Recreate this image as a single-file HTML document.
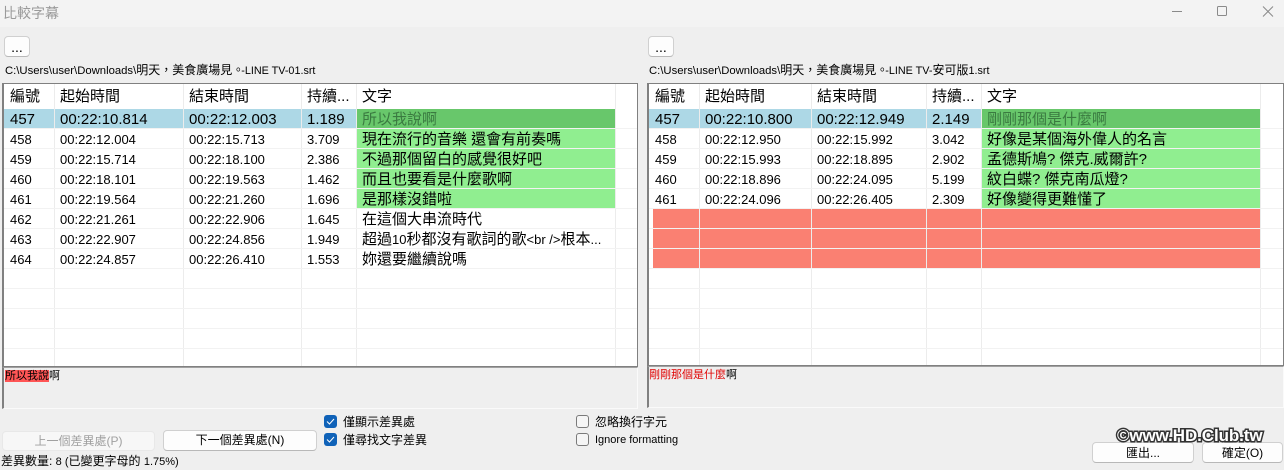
<!DOCTYPE html>
<html><head><meta charset="utf-8"><style>
*{box-sizing:border-box}
html,body{margin:0;padding:0}
body{width:1284px;height:469px;overflow:hidden;background:#efefef;position:relative;font:12px "Liberation Sans","WenQuanYi Zen Hei","Noto Sans CJK TC",sans-serif;color:#000}
.a{position:absolute;white-space:nowrap}
.tb{left:0;top:0;width:1284px;height:27px;background:#f3f3f3}
.btn{position:absolute;background:#fdfdfd;border:1px solid #d0d0d0;border-bottom-color:#b8b8b8;border-radius:4px;text-align:center;white-space:nowrap}
.list{position:absolute;top:83px;background:#fff;border:1px solid #808080;border-width:1px 1px 1px 2px;overflow:hidden}
.row{position:absolute;left:0;height:19px;display:grid;column-gap:1px;font-size:15px;line-height:21px}
.L .row{grid-template-columns:50px 128px 117px 54px 258px 21px}
.R .row{grid-template-columns:50px 111px 114px 54px 278px 21px}
.row div{padding-left:5px;overflow:hidden;white-space:nowrap;position:relative}
.row div:first-child{padding-left:6px}
.n div{font-size:13px}
.n div:nth-child(5){font-size:15px}
.n span{font-size:13px}
.h{top:0;height:25px;line-height:26px}
.s div:nth-child(-n+4){background:#add8e6}
.s div:nth-child(5){background:#68c76b;color:#3a7a40}
.g div:nth-child(5){background:#90ee90}
.r div:nth-child(-n+5){background:#fa8072}
.v{position:absolute;top:0;bottom:0;width:1px;background:#ececec}
.hl{position:absolute;left:0;right:0;height:1px;background:#f2f2f2}
.pn{position:absolute;border:1px solid #fafafa;border-left:2px solid #808080;border-top:1px solid #a0a0a0}
.cb{position:absolute;width:13px;height:13px;border-radius:3px;background:#0f62b8}
.cb svg{position:absolute;left:2px;top:2px}
.ub{position:absolute;width:13px;height:13px;border-radius:3px;border:1px solid #7a7a7a;background:#f5f5f5}
.wm{left:1117px;top:426px;font-size:17px;font-weight:bold;color:#fff;letter-spacing:-.1px;-webkit-text-stroke:3px #333;paint-order:stroke fill}
.p span{font-size:11.3px}
.p span+span{font-size:10.8px;margin-left:-3px}
</style></head><body>
<div class="a tb"></div>
<div class="a" style="left:3px;top:4px;font-size:14px;line-height:18px;color:#9a9a9a">比較字幕</div>
<svg class="a" style="left:1160px;top:0" width="124" height="27" fill="none" stroke="#8a8a8a" stroke-width="1"><path d="M12 11.5H22"/><rect x="57.5" y="6.5" width="9" height="9" rx="1"/><path d="M103 6.5L113 16.5M113 6.5L103 16.5"/></svg>

<div class="btn" style="left:4px;top:36px;width:26px;height:21px;line-height:20px;font-size:14px">...</div>
<div class="btn" style="left:648px;top:36px;width:26px;height:21px;line-height:20px;font-size:14px">...</div>
<div class="a p" style="left:5px;top:62px;line-height:16px"><span>C:\Users\user\Downloads\</span>明天，美食廣場見。<span>-LINE TV-01.srt</span></div>
<div class="a p" style="left:649px;top:62px;line-height:16px"><span>C:\Users\user\Downloads\</span>明天，美食廣場見。<span>-LINE TV-</span>安可版<span style="margin:0">1.srt</span></div>

<div class="list L" style="left:2px;width:636px;height:284px">
<i class="v" style="left:50px"></i><i class="v" style="left:179px"></i><i class="v" style="left:297px"></i><i class="v" style="left:352px"></i><i class="v" style="left:611px"></i>
<i class="hl" style="top:44px"></i><i class="hl" style="top:64px"></i><i class="hl" style="top:84px"></i><i class="hl" style="top:104px"></i><i class="hl" style="top:124px"></i><i class="hl" style="top:144px"></i><i class="hl" style="top:164px"></i><i class="hl" style="top:184px"></i><i class="hl" style="top:204px"></i><i class="hl" style="top:224px"></i><i class="hl" style="top:244px"></i><i class="hl" style="top:264px"></i>
<div class="row h"><div>編號</div><div>起始時間</div><div>結束時間</div><div>持續...</div><div>文字</div></div>
<div class="row s" style="top:25px"><div>457</div><div>00:22:10.814</div><div>00:22:12.003</div><div>1.189</div><div>所以我說啊</div></div>
<div class="row n g" style="top:45px"><div>458</div><div>00:22:12.004</div><div>00:22:15.713</div><div>3.709</div><div>現在流行的音樂 還會有前奏嗎</div></div>
<div class="row n g" style="top:65px"><div>459</div><div>00:22:15.714</div><div>00:22:18.100</div><div>2.386</div><div>不過那個留白的感覺很好吧</div></div>
<div class="row n g" style="top:85px"><div>460</div><div>00:22:18.101</div><div>00:22:19.563</div><div>1.462</div><div>而且也要看是什麼歌啊</div></div>
<div class="row n g" style="top:105px"><div>461</div><div>00:22:19.564</div><div>00:22:21.260</div><div>1.696</div><div>是那樣沒錯啦</div></div>
<div class="row n" style="top:125px"><div>462</div><div>00:22:21.261</div><div>00:22:22.906</div><div>1.645</div><div>在這個大串流時代</div></div>
<div class="row n" style="top:145px"><div>463</div><div>00:22:22.907</div><div>00:22:24.856</div><div>1.949</div><div>超過<span>10</span>秒都沒有歌詞的歌<span>&lt;br /&gt;</span>根本<span>...</span></div></div>
<div class="row n" style="top:165px"><div>464</div><div>00:22:24.857</div><div>00:22:26.410</div><div>1.553</div><div>妳還要繼續說嗎</div></div>
</div>

<div class="list R" style="left:647px;width:637px;height:283px">
<i class="v" style="left:50px"></i><i class="v" style="left:162px"></i><i class="v" style="left:277px"></i><i class="v" style="left:332px"></i><i class="v" style="left:611px"></i>
<i class="hl" style="top:44px"></i><i class="hl" style="top:64px"></i><i class="hl" style="top:84px"></i><i class="hl" style="top:104px"></i><i class="hl" style="top:124px"></i><i class="hl" style="top:144px"></i><i class="hl" style="top:164px"></i><i class="hl" style="top:184px"></i><i class="hl" style="top:204px"></i><i class="hl" style="top:224px"></i><i class="hl" style="top:244px"></i><i class="hl" style="top:264px"></i>
<div class="row h"><div>編號</div><div>起始時間</div><div>結束時間</div><div>持續...</div><div>文字</div></div>
<div class="row s" style="top:25px"><div>457</div><div>00:22:10.800</div><div>00:22:12.949</div><div>2.149</div><div>剛剛那個是什麼啊</div></div>
<div class="row n g" style="top:45px"><div>458</div><div>00:22:12.950</div><div>00:22:15.992</div><div>3.042</div><div>好像是某個海外偉人的名言</div></div>
<div class="row n g" style="top:65px"><div>459</div><div>00:22:15.993</div><div>00:22:18.895</div><div>2.902</div><div>孟德斯鳩? 傑克.威爾許?</div></div>
<div class="row n g" style="top:85px"><div>460</div><div>00:22:18.896</div><div>00:22:24.095</div><div>5.199</div><div>紋白蝶? 傑克南瓜燈?</div></div>
<div class="row n g" style="top:105px"><div>461</div><div>00:22:24.096</div><div>00:22:26.405</div><div>2.309</div><div>好像變得更難懂了</div></div>
<div class="row r" style="top:125px;left:4px;grid-template-columns:46px 111px 114px 54px 278px"><div></div><div></div><div></div><div></div><div></div></div>
<div class="row r" style="top:145px;left:4px;grid-template-columns:46px 111px 114px 54px 278px"><div></div><div></div><div></div><div></div><div></div></div>
<div class="row r" style="top:165px;left:4px;grid-template-columns:46px 111px 114px 54px 278px"><div></div><div></div><div></div><div></div><div></div></div>
</div>

<div class="pn" style="left:2px;top:367px;width:636px;height:42px"></div>
<div class="pn" style="left:647px;top:366px;width:637px;height:42px"></div>
<div class="a" style="left:5px;top:369px;font-size:11px;line-height:15px"><span style="background:#ff5555">所以我說</span>啊</div>
<div class="a" style="left:649px;top:368px;font-size:11px;line-height:15px"><span style="color:#e00000">剛剛那個是什麼</span>啊</div>

<div class="cb" style="left:324px;top:415px"><svg width="9" height="9" fill="none" stroke="#fff" stroke-width="1"><path d="M1 4.5L3.5 7L8 2"/></svg></div>
<div class="a" style="left:343px;top:415px;line-height:15px">僅顯示差異處</div>
<div class="cb" style="left:324px;top:433px"><svg width="9" height="9" fill="none" stroke="#fff" stroke-width="1"><path d="M1 4.5L3.5 7L8 2"/></svg></div>
<div class="a" style="left:343px;top:433px;line-height:15px">僅尋找文字差異</div>
<div class="ub" style="left:576px;top:415px"></div>
<div class="a" style="left:595px;top:415px;line-height:15px">忽略換行字元</div>
<div class="ub" style="left:576px;top:433px"></div>
<div class="a" style="left:595px;top:433px;line-height:15px;font-size:11px">Ignore formatting</div>

<div class="btn" style="left:2px;top:431px;width:153px;height:20px;line-height:18px;color:#a0a0a0;background:#f7f7f7;border-color:#e8e8e8">上一個差異處(P)</div>
<div class="btn" style="left:163px;top:430px;width:154px;height:21px;line-height:19px">下一個差異處(N)</div>
<div class="a" style="left:1px;top:453px;line-height:16px">差異數量: <span style="font-size:11px">8 (</span>已變更字母的 <span style="font-size:11px">1.75%)</span></div>

<div class="btn" style="left:1092px;top:442px;width:102px;height:21px;line-height:20px">匯出...</div>
<div class="btn" style="left:1202px;top:442px;width:81px;height:21px;line-height:20px">確定(O)</div>
<div class="a wm">©www.HD.Club.tw</div>
</body></html>
